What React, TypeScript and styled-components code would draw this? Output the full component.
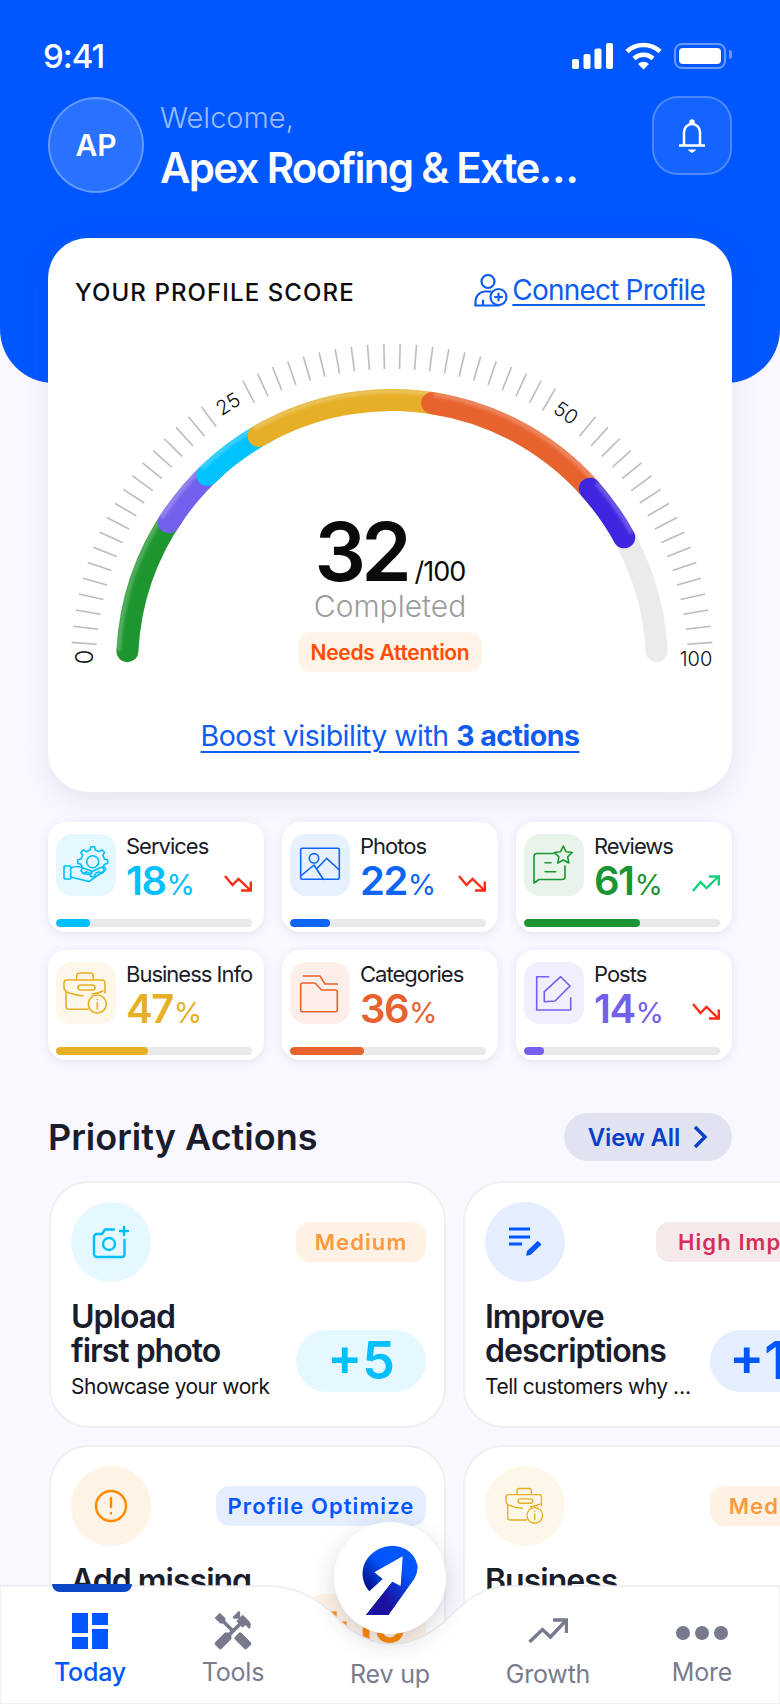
import React from 'react'
import styled, { createGlobalStyle } from 'styled-components'
import { MdHandyman } from 'react-icons/md'

const GlobalStyle = createGlobalStyle`
  html, body {
    margin: 0;
    padding: 0;
    background: #f9f7ff;
    font-family: Inter, "Noto Sans", sans-serif;
  }
  * {
    box-sizing: border-box;
  }
`

const Page = styled.div`
  position: relative;
  width: 780px;
  height: 1704px;
  overflow: hidden;
  background: #f9f7ff;
`

const Header = styled.header`
  height: 383px;
  padding: 40px 48px 0 43px;
  background: #0057ff;
  border-radius: 0 0 54px 54px;
  color: #fff;
`

const StatusBar = styled.div`
  display: flex;
  align-items: center;
  justify-content: space-between;
  height: 32px;
`

const Time = styled.span`
  font-size: 33px;
  font-weight: 500;
  letter-spacing: -1px;
`

const StatusIcons = styled.div`
  display: flex;
  align-items: center;
  gap: 12px;
  margin-right: -42px;
  padding-right: 42px;
`

const Battery = styled.div`
  position: relative;
  width: 52px;
  height: 26px;
  padding: 3px;
  margin-right: 6px;
  border: 2.5px solid rgba(255, 255, 255, 0.4);
  border-radius: 8px;

  &::before {
    content: '';
    display: block;
    height: 100%;
    background: #fff;
    border-radius: 4px;
  }

  &::after {
    content: '';
    position: absolute;
    top: 5px;
    right: -8px;
    width: 3px;
    height: 9px;
    background: rgba(255, 255, 255, 0.4);
    border-radius: 0 3px 3px 0;
  }
`

const ProfileRow = styled.div`
  display: flex;
  align-items: flex-start;
  margin: 24px 0 0 5px;
`

const Avatar = styled.div`
  display: flex;
  align-items: center;
  justify-content: center;
  flex: none;
  width: 96px;
  height: 96px;
  margin-top: 1px;
  background: rgba(255, 255, 255, 0.16);
  border: 2px solid rgba(255, 255, 255, 0.28);
  border-radius: 50%;
  font-size: 30px;
  font-weight: 600;
`

const Welcome = styled.div`
  flex: 1;
  margin-left: 16px;
`

const Hello = styled.div`
  margin-top: 2px;
  font-size: 29px;
  font-weight: 300;
  line-height: 40px;
  color: rgba(255, 255, 255, 0.62);
`

const Company = styled.div`
  margin-top: 5px;
  font-size: 42px;
  font-weight: 600;
  line-height: 50px;
  letter-spacing: -1.7px;
`

const BellButton = styled.div`
  display: flex;
  align-items: center;
  justify-content: center;
  flex: none;
  width: 80px;
  height: 79px;
  background: rgba(255, 255, 255, 0.08);
  border: 2px solid rgba(255, 255, 255, 0.24);
  border-radius: 26px;
`

const Main = styled.main`
  margin-top: -145px;
  padding: 0 48px;
`

const ScoreCard = styled.section`
  height: 554px;
  background: #fff;
  border-radius: 40px;
  box-shadow: 0 8px 28px rgba(60, 60, 110, 0.1);
`

const ScoreHead = styled.div`
  display: flex;
  align-items: center;
  justify-content: space-between;
  height: 72px;
  padding: 36px 27px 0;
`

const ScoreTitle = styled.h2`
  margin: 0;
  font-size: 24px;
  font-weight: 500;
  letter-spacing: 1.1px;
  color: #0c0c10;
`

const ConnectLink = styled.a`
  display: flex;
  align-items: center;
  gap: 4px;
  margin-bottom: 4px;
  font-size: 28px;
  font-weight: 400;
  letter-spacing: -0.8px;
  color: #0f5cf0;
  text-decoration: underline;
  text-decoration-thickness: 2px;
  text-underline-offset: 4px;
`

const GaugeWrap = styled.div`
  position: relative;
  height: 370px;
`

const GaugeLabel = styled.text<{ $size?: number }>`
  font-family: Inter, sans-serif;
  font-size: ${({ $size }) => $size ?? 20}px;
  font-weight: 300;
  fill: #0c0c10;
  text-anchor: middle;
  dominant-baseline: central;
`

const GaugeCenter = styled.div`
  position: absolute;
  top: 207px;
  left: 0;
  right: 0;
  display: flex;
  flex-direction: column;
  align-items: center;
`

const ScoreRow = styled.div`
  display: flex;
  align-items: baseline;
  height: 70px;
  line-height: 70px;
  color: #0a0a0a;
`

const ScoreValue = styled.span`
  font-size: 81px;
  font-weight: 600;
  letter-spacing: -5px;
`

const ScoreMax = styled.span`
  margin-left: 8px;
  font-size: 27px;
  font-weight: 400;
  letter-spacing: -1px;
`

const Completed = styled.div`
  margin-top: 4px;
  font-size: 30px;
  font-weight: 300;
  line-height: 30px;
  color: #9c9c9c;
`

const AttentionPill = styled.div`
  display: flex;
  align-items: center;
  justify-content: center;
  width: 184px;
  height: 40px;
  margin-top: 11px;
  background: #fff3e8;
  border-radius: 14px;
  font-size: 21px;
  font-weight: 600;
  letter-spacing: -0.3px;
  color: #ff4d00;
`

const BoostLink = styled.a`
  display: block;
  margin-top: 38px;
  font-size: 28.5px;
  line-height: 36px;
  text-align: center;
  letter-spacing: -0.5px;
  color: #0f5cf0;
  text-decoration: underline;
  text-decoration-thickness: 2px;
  text-underline-offset: 5px;

  b {
    font-weight: 700;
  }
`

const StatsGrid = styled.section`
  display: grid;
  grid-template-columns: repeat(3, 216px);
  gap: 18px;
  margin-top: 30px;
`

const StatCard = styled.div`
  height: 110px;
  padding: 12px 12px 0 8px;
  background: #fff;
  border-radius: 18px;
  box-shadow: 0 2px 10px rgba(60, 60, 110, 0.1);
`

const StatTop = styled.div`
  display: flex;
  gap: 10px;
`

const StatTile = styled.div<{ $bg: string }>`
  flex: none;
  width: 60px;
  height: 62px;
  background: ${({ $bg }) => $bg};
  border-radius: 16px;
`

const StatBody = styled.div`
  flex: 1;
  min-width: 0;
`

const StatLabel = styled.div`
  font-size: 22px;
  font-weight: 400;
  line-height: 24px;
  letter-spacing: -1px;
  white-space: nowrap;
  color: #1a1c28;
`

const StatValueRow = styled.div`
  display: flex;
  align-items: center;
  justify-content: space-between;
  margin-top: 3px;
`

const StatValue = styled.div<{ $color: string }>`
  font-size: 40px;
  font-weight: 600;
  line-height: 40px;
  letter-spacing: -1.5px;
  color: ${({ $color }) => $color};

  small {
    margin-left: 1px;
    font-size: 29px;
    font-weight: 400;
    letter-spacing: 0;
  }
`

const BarTrack = styled.div`
  height: 8px;
  margin-top: 14px;
  background: #e9e9e9;
  border-radius: 4px;
  overflow: hidden;
`

const BarFill = styled.div<{ $color: string }>`
  height: 100%;
  background: ${({ $color }) => $color};
  border-radius: 4px;
`

const SectionHead = styled.div`
  display: flex;
  align-items: center;
  justify-content: space-between;
  height: 48px;
  margin: 53px 0 0;
`

const SectionTitle = styled.h2`
  margin: 0;
  font-size: 36px;
  font-weight: 600;
  letter-spacing: 0;
  color: #1a1d2b;
`

const ViewAll = styled.div`
  display: flex;
  align-items: center;
  gap: 13px;
  height: 48px;
  padding: 0 24px;
  background: #e2e3f0;
  border-radius: 24px;
  font-size: 24px;
  font-weight: 600;
  letter-spacing: -0.2px;
  color: #0a3fc8;
`

const ActionsGrid = styled.section`
  display: grid;
  grid-template-columns: 397px 397px;
  gap: 17px;
  width: 811px;
  margin: 20px 0 0 1px;
`

const ActionCard = styled.article`
  height: 247px;
  padding: 19px 18px 0 20px;
  background: #fff;
  border: 2px solid #f0f0f2;
  border-radius: 40px;
`

const ActionTop = styled.div`
  display: flex;
  align-items: flex-start;
  justify-content: space-between;
`

const ActionIcon = styled.div<{ $bg: string }>`
  display: flex;
  align-items: center;
  justify-content: center;
  flex: none;
  width: 80px;
  height: 80px;
  background: ${({ $bg }) => $bg};
  border-radius: 50%;
`

const Badge = styled.div<{ $bg: string; $color: string; $width: number }>`
  flex: none;
  width: ${({ $width }) => $width}px;
  height: 40px;
  margin-top: 20px;
  background: ${({ $bg }) => $bg};
  border-radius: 14px;
  font-size: 22px;
  font-weight: 600;
  line-height: 40px;
  text-align: center;
  letter-spacing: 1.1px;
  white-space: nowrap;
  color: ${({ $color }) => $color};
`

const ActionBottom = styled.div`
  display: flex;
  justify-content: space-between;
  margin-top: 18px;
`

const ActionText = styled.div`
  width: 214px;
  min-width: 0;
`

const ActionTitle = styled.h3`
  margin: 0;
  font-size: 32px;
  font-weight: 600;
  line-height: 34px;
  letter-spacing: -1px;
  white-space: pre-line;
  color: #1a1d2b;
`

const ActionSub = styled.p`
  margin: 4px 0 0;
  font-size: 21px;
  line-height: 30px;
  letter-spacing: -0.5px;
  white-space: nowrap;
  overflow: hidden;
  text-overflow: ellipsis;
  color: #14151c;
`

const PointsPill = styled.div<{ $bg: string; $color: string }>`
  flex: none;
  width: 130px;
  height: 62px;
  margin-top: 30px;
  background: ${({ $bg }) => $bg};
  border-radius: 31px;
  font-size: 52px;
  font-weight: 600;
  line-height: 62px;
  text-align: center;
  color: ${({ $color }) => $color};
`

const TabBar = styled.nav`
  position: absolute;
  left: 0;
  right: 0;
  bottom: 0;
  height: 119px;
  padding: 26px 0 0 30px;
  display: grid;
  grid-template-columns: 120px 166px 148px 168px 140px;
`

const TabShape = styled.svg`
  position: absolute;
  top: 0;
  left: 0;
`

const ActiveMark = styled.div`
  position: absolute;
  top: -1px;
  left: 52px;
  width: 80px;
  height: 8px;
  background: #0a47c9;
  border-radius: 0 0 8px 8px;
`

const Tab = styled.div<{ $active?: boolean }>`
  position: relative;
  display: flex;
  flex-direction: column;
  align-items: center;
  color: ${({ $active }) => ($active ? '#0057ff' : '#7a7c8e')};
`

const TabIcon = styled.div`
  display: flex;
  align-items: center;
  justify-content: center;
  height: 40px;
`

const TabLabel = styled.span<{ $active?: boolean; $low?: boolean }>`
  margin-top: ${({ $low }) => ($low ? 8 : 6)}px;
  font-size: 25px;
  font-weight: ${({ $active }) => ($active ? 500 : 400)};
  line-height: 30px;
  letter-spacing: -0.2px;
`

const Fab = styled.div`
  position: absolute;
  left: 334px;
  top: -63px;
  display: flex;
  align-items: center;
  justify-content: center;
  width: 112px;
  height: 112px;
  padding-top: 4px;
  background: #fff;
  border-radius: 50%;
  box-shadow: 0 8px 24px rgba(40, 40, 70, 0.18);
`

const MoreDots = styled.div`
  display: flex;
  gap: 5px;
  margin-top: 4px;

  i {
    width: 14px;
    height: 14px;
    background: #777a8c;
    border-radius: 50%;
  }
`

// gauge geometry, angles are degrees clockwise from the left end
const CX = 392
const CY = 665
const pt = (deg: number, r: number) => {
  const a = (deg * Math.PI) / 180
  return { x: CX - r * Math.cos(a), y: CY - r * Math.sin(a) }
}
const arc = (from: number, to: number, r: number) => {
  const a = pt(from, r)
  const b = pt(to, r)
  return `M${a.x.toFixed(2)} ${a.y.toFixed(2)}A${r} ${r} 0 0 1 ${b.x.toFixed(2)} ${b.y.toFixed(2)}`
}

const segments = [
  { from: 3, to: 35, color: '#1e962f' },
  { from: 32.6, to: 48, color: '#7360ec' },
  { from: 45.8, to: 62, color: '#00c2ff' },
  { from: 59.8, to: 101, color: '#e6af25' },
  { from: 98.7, to: 141, color: '#e8622e' },
  { from: 138.3, to: 151.2, color: '#3e25e0' },
]

const ticks: number[] = []
for (let i = 0; i < 30; i++) {
  const off = 1.46 + i * 2.914
  if (i !== 10 && i !== 11) ticks.push(90 - off)
  if (i !== 11 && i !== 12) ticks.push(90 + off)
}

function Gauge() {
  return (
    <svg width="684" height="370" viewBox="48 310 684 370" fill="none" style={{ display: 'block' }}>
      <defs>
        <filter id="soft" x="-20%" y="-20%" width="140%" height="140%">
          <feGaussianBlur stdDeviation="1.8" />
        </filter>
      </defs>
      {ticks.map(t => {
        const a = pt(t, 296)
        const b = pt(t, 321)
        return <line key={t} x1={a.x} y1={a.y} x2={b.x} y2={b.y} stroke="#bcbcbc" strokeWidth="1.6" />
      })}
      <path d={arc(3, 177, 265)} stroke="#ebebeb" strokeWidth="22" strokeLinecap="round" />
      {segments.map(s => (
        <g key={s.color}>
          <path d={arc(s.from, s.to, 265)} stroke={s.color} strokeWidth="22" strokeLinecap="round" />
          <path d={arc(s.from, s.to, 274)} stroke="#fff" strokeOpacity="0.24" strokeWidth="5" filter="url(#soft)" />
        </g>
      ))}
      <GaugeLabel $size={24} x="84" y="657" transform="rotate(-90 84 657)">0</GaugeLabel>
      <GaugeLabel x="228" y="404" transform="rotate(-32 228 404)">25</GaugeLabel>
      <GaugeLabel x="566" y="413" transform="rotate(35 566 413)">50</GaugeLabel>
      <GaugeLabel x="696" y="659">100</GaugeLabel>
    </svg>
  )
}

const gearPath = (cx: number, cy: number, outer: number, inner: number, teeth: number) => {
  const pts: string[] = []
  const step = (Math.PI * 2) / teeth
  for (let i = 0; i < teeth; i++) {
    const a = i * step
    const list: [number, number][] = [
      [a - step * 0.28, inner],
      [a - step * 0.16, outer],
      [a + step * 0.16, outer],
      [a + step * 0.28, inner],
    ]
    list.forEach(([ang, r]) => pts.push(`${(cx + r * Math.cos(ang)).toFixed(2)} ${(cy + r * Math.sin(ang)).toFixed(2)}`))
  }
  return `M${pts.join('L')}Z`
}

const TileSvg = ({ color, children }: { color: string; children: React.ReactNode }) => (
  <svg width="60" height="62" viewBox="0 0 60 62" fill="none" stroke={color} strokeWidth="1.6" strokeLinecap="round" strokeLinejoin="round">
    {children}
  </svg>
)

const ServicesIcon = ({ color }: { color: string }) => (
  <TileSvg color={color}>
    <path d={gearPath(36.7, 27.7, 15, 12, 8)} />
    <circle cx="36.7" cy="27.7" r="6" />
    <rect x="8" y="32" width="6.7" height="13" rx="1" />
    <path d="M14.7 34c5-2 9-2 12.3 0l7 2.5c3 1 2 4.5-1 4l-6-1" />
    <path d="M35 38l11-5c3-1 5 2 2 4L33 47.5 14.7 43" />
  </TileSvg>
)

const PhotosIcon = ({ color }: { color: string }) => (
  <TileSvg color={color}>
    <rect x="10.7" y="14.3" width="38.6" height="31" rx="1.5" />
    <circle cx="24" cy="24.3" r="4.7" />
    <path d="M10.7 42L24 31l9.3 14.3M27.3 34.3l9.4-10 12.6 11.7" />
  </TileSvg>
)

const ReviewsIcon = ({ color }: { color: string }) => (
  <TileSvg color={color}>
    <path d="M30 19.5H13a3 3 0 0 0-3 3V49l5-3.5h23a3 3 0 0 0 3-3V32" />
    <path d="M21 28.7h6M21 37.7h10.7" />
    <path d="M39.3 12l2.7 5.7 6.2.8-4.5 4.3 1.1 6.2-5.5-3-5.500 3 1.100-6.200-4.500-4.300 6.200-.8z" />
  </TileSvg>
)

const BriefcaseInfoIcon = ({ color, width = 60 }: { color: string; width?: number }) => (
  <svg width={width} height={(width * 62) / 60} viewBox="0 0 60 62" fill="none" stroke={color} strokeWidth="1.6" strokeLinecap="round" strokeLinejoin="round">
    <path d="M20.7 18v-4a3 3 0 0 1 3-3h10.600a3 3 0 0 1 3 3v4" />
    <path d="M32 47.3H13a3 3 0 0 1-3-3V29.700" />
    <path d="M49 31V21a3 3 0 0 0-3-3H11a3 3 0 0 0-3 3v4c0 3 1.500 4.500 4 5.500 5 2 10 3 15 3.200" />
    <path d="M36 32c4-.5 8-1.500 11-3" />
    <rect x="22" y="23" width="17" height="5" rx="2.5" />
    <circle cx="41.3" cy="42" r="9" />
    <path d="M41.3 40.500v6.500M41.3 37.200v.3" />
  </svg>
)

const FolderIcon = ({ color }: { color: string }) => (
  <TileSvg color={color}>
    <path d="M13.3 14H30l5 8h12.3" />
    <path d="M10.7 23a2 2 0 0 1 2-2H25l6.700 7H45.300a2 2 0 0 1 2 2v17.700a2 2 0 0 1-2 2H12.700a2 2 0 0 1-2-2z" />
  </TileSvg>
)

const PostsIcon = ({ color }: { color: string }) => (
  <TileSvg color={color}>
    <path d="M25.3 14.7H12.7V48h34V35.3" strokeLinecap="butt" />
    <path d="M20.3 39.7v-10L36.7 14.700l9.300 9.300-15 15z" />
  </TileSvg>
)

const Trend = ({ up }: { up?: boolean }) =>
  up ? (
    <svg width="28" height="17" viewBox="0 0 28 17" fill="none" stroke="#14d27a" strokeWidth="2.4">
      <path d="M1 16l7.500-9 6 6L26 2" />
      <path d="M17 1.500h9.800v9" />
    </svg>
  ) : (
    <svg width="28" height="17" viewBox="0 0 28 17" fill="none" stroke="#ff2a12" strokeWidth="2.4">
      <path d="M1 1l7.500 9 6-6L26 15" />
      <path d="M17 15.500h9.800v-9" />
    </svg>
  )

const stats = [
  { label: 'Services', value: 18, fill: 17.5, color: '#00bfff', tile: '#e5f8ff', Icon: ServicesIcon },
  { label: 'Photos', value: 22, fill: 20.5, color: '#0f66f5', tile: '#e6f0ff', Icon: PhotosIcon },
  { label: 'Reviews', value: 61, fill: 59, color: '#1c9433', tile: '#e8f4ea', Icon: ReviewsIcon, up: true },
  { label: 'Business Info', value: 47, fill: 47, color: '#e6af25', tile: '#fdf7e9', Icon: BriefcaseInfoIcon, noTrend: true },
  { label: 'Categories', value: 36, fill: 38, color: '#e8622e', tile: '#fcefea', Icon: FolderIcon, noTrend: true },
  { label: 'Posts', value: 14, fill: 10, color: '#7360ec', tile: '#f0effd', Icon: PostsIcon },
]

const CameraPlus = () => (
  <svg width="80" height="80" viewBox="0 0 80 80" fill="none" stroke="#00bfff" strokeWidth="2.4" strokeLinecap="round" strokeLinejoin="round">
    <path d="M31 32h-5a3 3 0 0 0-3 3v17a3 3 0 0 0 3 3h25a2.500 2.500 0 0 0 2.500-2.500V38M31 32l3-4.500h9" />
    <circle cx="38" cy="42" r="6" />
    <path d="M53 25v8M49 29h8" />
  </svg>
)

const LinesPen = () => (
  <svg width="80" height="80" viewBox="0 0 80 80" fill="none" stroke="#0057ff" strokeLinecap="butt">
    <path d="M24 27h21M24 35h21M24 42h13" strokeWidth="2.8" />
    <path d="M55.500 42.500l-10 9.500-3.500 1 .8-3.800 10-9.500z" fill="#0057ff" strokeWidth="1.5" strokeLinejoin="round" />
  </svg>
)

const AlertCircle = () => (
  <svg width="80" height="80" viewBox="0 0 80 80" fill="none" stroke="#ff8a00" strokeWidth="2.4" strokeLinecap="round">
    <circle cx="40" cy="40" r="15" />
    <path d="M40 32v9M40 47v.4" />
  </svg>
)

const actions = [
  { title: 'Upload\nfirst photo', sub: 'Showcase your work', tag: 'Medium', tagW: 130, points: '+5', icon: <CameraPlus />, iconBg: '#e5f8ff', tagBg: '#fff2e5', tagColor: '#f89b3f', ptBg: '#e5f8ff', ptColor: '#00bfff' },
  { title: 'Improve\ndescriptions', sub: 'Tell customers why you are great', tag: 'High Impact', tagW: 184, points: '+10', icon: <LinesPen />, iconBg: '#e4eeff', tagBg: '#f5e9ea', tagColor: '#d42f5c', ptBg: '#e4eeff', ptColor: '#0057ff' },
  { title: 'Add missing\ninformation', sub: 'Complete your profile', tag: 'Profile Optimize', tagW: 210, points: '+15', icon: <AlertCircle />, iconBg: '#fff3e6', tagBg: '#e4eeff', tagColor: '#0057ff', ptBg: '#fff3e6', ptColor: '#ff8a00' },
  { title: 'Business\ninfo', sub: 'Add your hours', tag: 'Medium', tagW: 130, points: '+8', icon: <BriefcaseInfoIcon color="#e6af25" width={52} />, iconBg: '#fdf7e9', tagBg: '#fff2e5', tagColor: '#f89b3f', ptBg: '#fdf7e9', ptColor: '#e6af25' },
]

export default function App() {
  return (
    <Page>
      <GlobalStyle />
      <Header>
        <StatusBar>
          <Time>9:41</Time>
          <StatusIcons>
            <svg width="41" height="27" viewBox="0 0 41 27" fill="#fff">
              <rect x="0" y="16" width="7" height="10" rx="2" />
              <rect x="11.5" y="11" width="7" height="15" rx="2" />
              <rect x="22.5" y="5.5" width="7" height="20.5" rx="2" />
              <rect x="34" y="0" width="7" height="26" rx="2" />
            </svg>
            <svg width="37" height="28" viewBox="0 0 37 28" fill="none" stroke="#fff">
              <path d="M2 9.5a24 24 0 0 1 33 0" strokeWidth="4.5" />
              <path d="M9 16.5a14 14 0 0 1 19 0" strokeWidth="4.5" />
              <path d="M13 22a8 8 0 0 1 11 0l-5.500 5.500z" fill="#fff" stroke="none" />
            </svg>
            <Battery />
          </StatusIcons>
        </StatusBar>
        <ProfileRow>
          <Avatar>AP</Avatar>
          <Welcome>
            <Hello>Welcome,</Hello>
            <Company>Apex Roofing &amp; Exte…</Company>
          </Welcome>
          <BellButton>
            <svg width="28" height="34" viewBox="0 0 28 34" fill="none" stroke="#fff" strokeWidth="2.5">
              <path d="M6 26V13a8 8 0 0 1 16 0v13" />
              <path d="M1 26.500h26" />
              <circle cx="14" cy="3" r="1.5" fill="#fff" />
              <path d="M10.500 31h7l-3.500 2.500z" fill="#fff" strokeWidth="1" />
            </svg>
          </BellButton>
        </ProfileRow>
      </Header>

      <Main>
        <ScoreCard>
          <ScoreHead>
            <ScoreTitle>YOUR PROFILE SCORE</ScoreTitle>
            <ConnectLink>
              <svg width="34" height="33" viewBox="0 0 34 33" fill="none" stroke="#0f5cf0" strokeWidth="2.2" strokeLinecap="round" strokeLinejoin="round">
                <circle cx="14" cy="7.5" r="6.5" />
                <path d="M1.500 31.500V27a10 10 0 0 1 9-9.500h6" />
                <path d="M1.500 31.500h23M9 31.500v-5" />
                <circle cx="24.5" cy="23" r="8" fill="#fff" />
                <path d="M24.500 19.500v7M21 23h7" />
              </svg>
              Connect Profile
            </ConnectLink>
          </ScoreHead>
          <GaugeWrap>
            <Gauge />
            <GaugeCenter>
              <ScoreRow>
                <ScoreValue>32</ScoreValue>
                <ScoreMax>/100</ScoreMax>
              </ScoreRow>
              <Completed>Completed</Completed>
              <AttentionPill>Needs Attention</AttentionPill>
            </GaugeCenter>
          </GaugeWrap>
          <BoostLink>
            Boost visibility with <b>3 actions</b>
          </BoostLink>
        </ScoreCard>

        <StatsGrid>
          {stats.map(s => (
            <StatCard key={s.label}>
              <StatTop>
                <StatTile $bg={s.tile}>
                  <s.Icon color={s.color} />
                </StatTile>
                <StatBody>
                  <StatLabel>{s.label}</StatLabel>
                  <StatValueRow>
                    <StatValue $color={s.color}>
                      {s.value}
                      <small>%</small>
                    </StatValue>
                    {!s.noTrend && <Trend up={s.up} />}
                  </StatValueRow>
                </StatBody>
              </StatTop>
              <BarTrack>
                <BarFill $color={s.color} style={{ width: `${s.fill}%` }} />
              </BarTrack>
            </StatCard>
          ))}
        </StatsGrid>

        <SectionHead>
          <SectionTitle>Priority Actions</SectionTitle>
          <ViewAll>
            View All
            <svg width="15" height="24" viewBox="0 0 15 24" fill="none" stroke="#0a3fc8" strokeWidth="3.4">
              <path d="M2 2l10 10L2 22" />
            </svg>
          </ViewAll>
        </SectionHead>

        <ActionsGrid>
          {actions.map(a => (
            <ActionCard key={a.title}>
              <ActionTop>
                <ActionIcon $bg={a.iconBg}>{a.icon}</ActionIcon>
                <Badge $bg={a.tagBg} $color={a.tagColor} $width={a.tagW}>
                  {a.tag}
                </Badge>
              </ActionTop>
              <ActionBottom>
                <ActionText>
                  <ActionTitle>{a.title}</ActionTitle>
                  <ActionSub>{a.sub}</ActionSub>
                </ActionText>
                <PointsPill $bg={a.ptBg} $color={a.ptColor}>
                  {a.points}
                </PointsPill>
              </ActionBottom>
            </ActionCard>
          ))}
        </ActionsGrid>
      </Main>

      <TabBar>
        <TabShape width="780" height="119" viewBox="0 0 780 119">
          <path
            d="M0 1H265C300 1 320 16 335 31C355 51 375 59 392 59C410 59 428 51 445 36C462 19 480 1 510 1H780V119H0Z"
            fill="#fff"
            stroke="#ececf2"
            strokeWidth="1.5"
          />
        </TabShape>
        <ActiveMark />
        <Tab $active>
          <TabIcon>
            <svg width="36" height="36" viewBox="0 0 36 36" fill="#0057ff">
              <rect x="0" y="0" width="16" height="20" />
              <rect x="0" y="24" width="16" height="12" />
              <rect x="20" y="0" width="16" height="12" />
              <rect x="20" y="16" width="16" height="20" />
            </svg>
          </TabIcon>
          <TabLabel $active>Today</TabLabel>
        </Tab>
        <Tab>
          <TabIcon>
            <MdHandyman size={44} color="#777a8c" />
          </TabIcon>
          <TabLabel>Tools</TabLabel>
        </Tab>
        <Tab>
          <TabIcon />
          <TabLabel $low>Rev up</TabLabel>
        </Tab>
        <Tab>
          <TabIcon>
            <svg width="40" height="26" viewBox="0 0 40 26" fill="none" stroke="#777a8c" strokeWidth="3.4">
              <path d="M1.500 24l13-12.500 8 7.500L37 3.500" />
              <path d="M25 2h13.500v13" />
            </svg>
          </TabIcon>
          <TabLabel $low>Growth</TabLabel>
        </Tab>
        <Tab>
          <TabIcon>
            <MoreDots>
              <i />
              <i />
              <i />
            </MoreDots>
          </TabIcon>
          <TabLabel>More</TabLabel>
        </Tab>
        <Fab>
          <svg width="60" height="72" viewBox="90 70 180 216">
            <defs>
              <linearGradient id="logoTop" x1="230" y1="90" x2="110" y2="210" gradientUnits="userSpaceOnUse">
                <stop offset="0.45" stopColor="#0057ff" />
                <stop offset="1" stopColor="#000a80" />
              </linearGradient>
              <linearGradient id="logoLow" x1="250" y1="170" x2="130" y2="260" gradientUnits="userSpaceOnUse">
                <stop offset="0" stopColor="#0057ff" />
                <stop offset="0.7" stopColor="#1c12a0" />
              </linearGradient>
            </defs>
            <path d="M118 212C90 180 90 130 125 100C160 68 215 68 245 100C270 128 265 160 245 185L175 283L108 283L187 183L212 197L218 107L133 155L158 175Z" fill="url(#logoTop)" />
            <path d="M262 130C264 150 258 168 245 185L175 283L108 283L187 183L212 197L218 140Z" fill="url(#logoLow)" />
          </svg>
        </Fab>
      </TabBar>
    </Page>
  )
}
